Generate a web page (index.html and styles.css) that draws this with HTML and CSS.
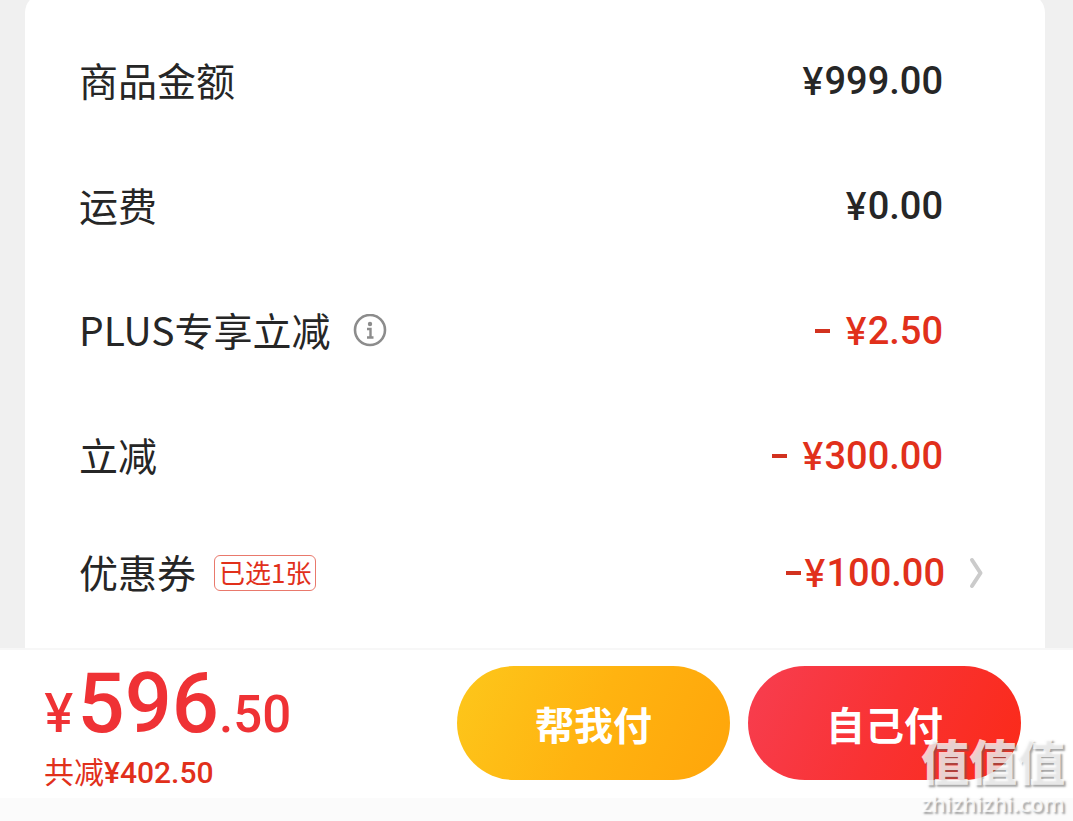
FILE: index.html
```
<!DOCTYPE html>
<html lang="zh-CN">
<head>
    <meta charset="UTF-8">
    <meta name="viewport" content="width=device-width, initial-scale=1.0">
    <title>确认订单</title>
    <link rel="stylesheet" href="styles.css">
</head>
<body>
<main class="card">
    <div class="row">
        <span class="label">商品金额</span>
        <span class="price"><span class="yen">¥</span>999.00</span>
    </div>
    <div class="row">
        <span class="label">运费</span>
        <span class="price"><span class="yen">¥</span>0.00</span>
    </div>
    <div class="row">
        <span class="label">PLUS专享立减</span>
        <button class="info" type="button" aria-label="说明">
            <svg width="34" height="34" viewBox="0 0 34 34">
                <circle cx="17" cy="16" r="15" fill="none" stroke="#8c8c8c" stroke-width="2.6"/>
                <circle cx="17" cy="10" r="2.2" fill="#8c8c8c"/>
                <path d="M14 15h3.500v8M14 23.500h6.500" fill="none" stroke="#8c8c8c" stroke-width="2.400"/>
            </svg>
        </button>
        <span class="price red"><span class="minus"></span><span class="yen">¥</span>2.50</span>
    </div>
    <div class="row">
        <span class="label">立减</span>
        <span class="price red"><span class="minus"></span><span class="yen">¥</span>300.00</span>
    </div>
    <div class="row coupon">
        <span class="label">优惠券</span>
        <span class="tag">已选1张</span>
        <span class="price red"><span class="minus"></span><span class="yen">¥</span>100.00</span>
        <svg class="arrow" width="14" height="32" viewBox="0 0 14 32">
            <path d="M3 3L11.500 16L3 29" fill="none" stroke="#cbcbcb" stroke-width="4" stroke-linecap="round" stroke-linejoin="round"/>
        </svg>
    </div>
</main>

<footer class="bar">
    <div class="total">
        <div class="sum"><span class="yen">¥</span>596<span class="cents">.50</span></div>
        <div class="saved">共减<b>¥402.50</b></div>
    </div>
    <button class="btn yellow" type="button">帮我付</button>
    <button class="btn crimson" type="button">自己付</button>
</footer>

<div class="mark">
    <div class="mark-name">值值值</div>
    <div class="mark-site">zhizhizhi.com</div>
</div>
</body>
</html>
```
FILE: styles.css
```
*{
    box-sizing: border-box;
}
body{
    margin: 0;
    min-height: 100vh;
    display: flex;
    flex-direction: column;
    overflow-x: hidden;
    background: #f0f0f0;
    color: #262626;
    font-family: Roboto, "Noto Sans CJK SC", sans-serif;
}
button{
    border: 0;
    padding: 0;
    background: none;
    font-family: inherit;
}
.card{
    flex: 1;
    margin: -7px 28px 0 25px;
    padding: 25px 62px 0 54px;
    border-radius: 20px 20px 0 0;
    background: #fff;
}
.row{
    display: flex;
    align-items: center;
    height: 125px;
    padding-right: 40px;
}
.label{
    padding-bottom: 4px;
    font-family: "Noto Sans CJK SC", sans-serif;
    font-size: 39px;
    line-height: 56px;
}
.info{
    width: 34px;
    height: 34px;
    margin-left: 22px;
}
.info svg{
    display: block;
}
.price{
    display: flex;
    align-items: center;
    margin-left: auto;
    font-size: 38px;
    font-weight: 500;
    line-height: 48px;
}
.yen{
    font-family: Inter, sans-serif;
}
.price .yen{
    margin-right: 1px;
}
.red{
    color: #e1301b;
}
.minus{
    width: 15px;
    height: 4px;
    margin-right: 15px;
    background: #d2321f;
}
.coupon{
    height: 110px;
    padding-right: 0;
}
.coupon .minus{
    margin-right: 3px;
}
.tag{
    margin-left: 18px;
    padding: 0 4px 2px;
    border: 1px solid #e9796c;
    border-radius: 6px;
    color: #e1301b;
    font-family: "Noto Sans CJK SC", sans-serif;
    font-size: 26px;
    line-height: 32px;
}
.arrow{
    margin-left: 24px;
}
.bar{
    display: flex;
    align-items: flex-start;
    height: 173px;
    padding: 16px 52px 0 44px;
    border-top: 2px solid #f7f7f7;
    background: linear-gradient(#fff 148px, #fbfbfb 148px);
}
.total{
    flex: 1;
    color: #ef3235;
}
.sum{
    font-size: 83px;
    font-weight: 500;
    line-height: 76px;
}
.sum .yen{
    margin-right: 4px;
    font-size: 53px;
}
.sum .cents{
    font-size: 51px;
}
.saved{
    color: #e1301b;
    font-size: 30px;
    line-height: 40px;
}
.saved b{
    font-weight: 500;
}
.btn{
    width: 273px;
    height: 114px;
    padding-bottom: 1px;
    border-radius: 57px;
    color: #fff;
    font-family: "Noto Sans CJK SC", sans-serif;
    font-size: 39px;
    font-weight: 700;
}
.yellow{
    background: linear-gradient(115deg, #fdc71b, #ffb310 50%, #ffa50a);
}
.crimson{
    margin-left: 18px;
    background: linear-gradient(115deg, #f73e50, #f93233 50%, #fb2a18);
}
/* watermark over the bar */
.mark{
    position: absolute;
    right: 8px;
    bottom: 4px;
    color: rgba(255, 255, 255, .76);
    text-align: center;
    text-shadow: 2px 2px 2px rgba(90, 90, 90, .55);
    pointer-events: none;
}
.mark-name{
    font-family: "Noto Sans CJK SC", sans-serif;
    font-size: 48px;
    font-weight: 900;
    line-height: 60px;
}
.mark-site{
    font-family: "Open Sans", sans-serif;
    font-size: 22px;
    font-weight: 600;
    line-height: 28px;
}
```
